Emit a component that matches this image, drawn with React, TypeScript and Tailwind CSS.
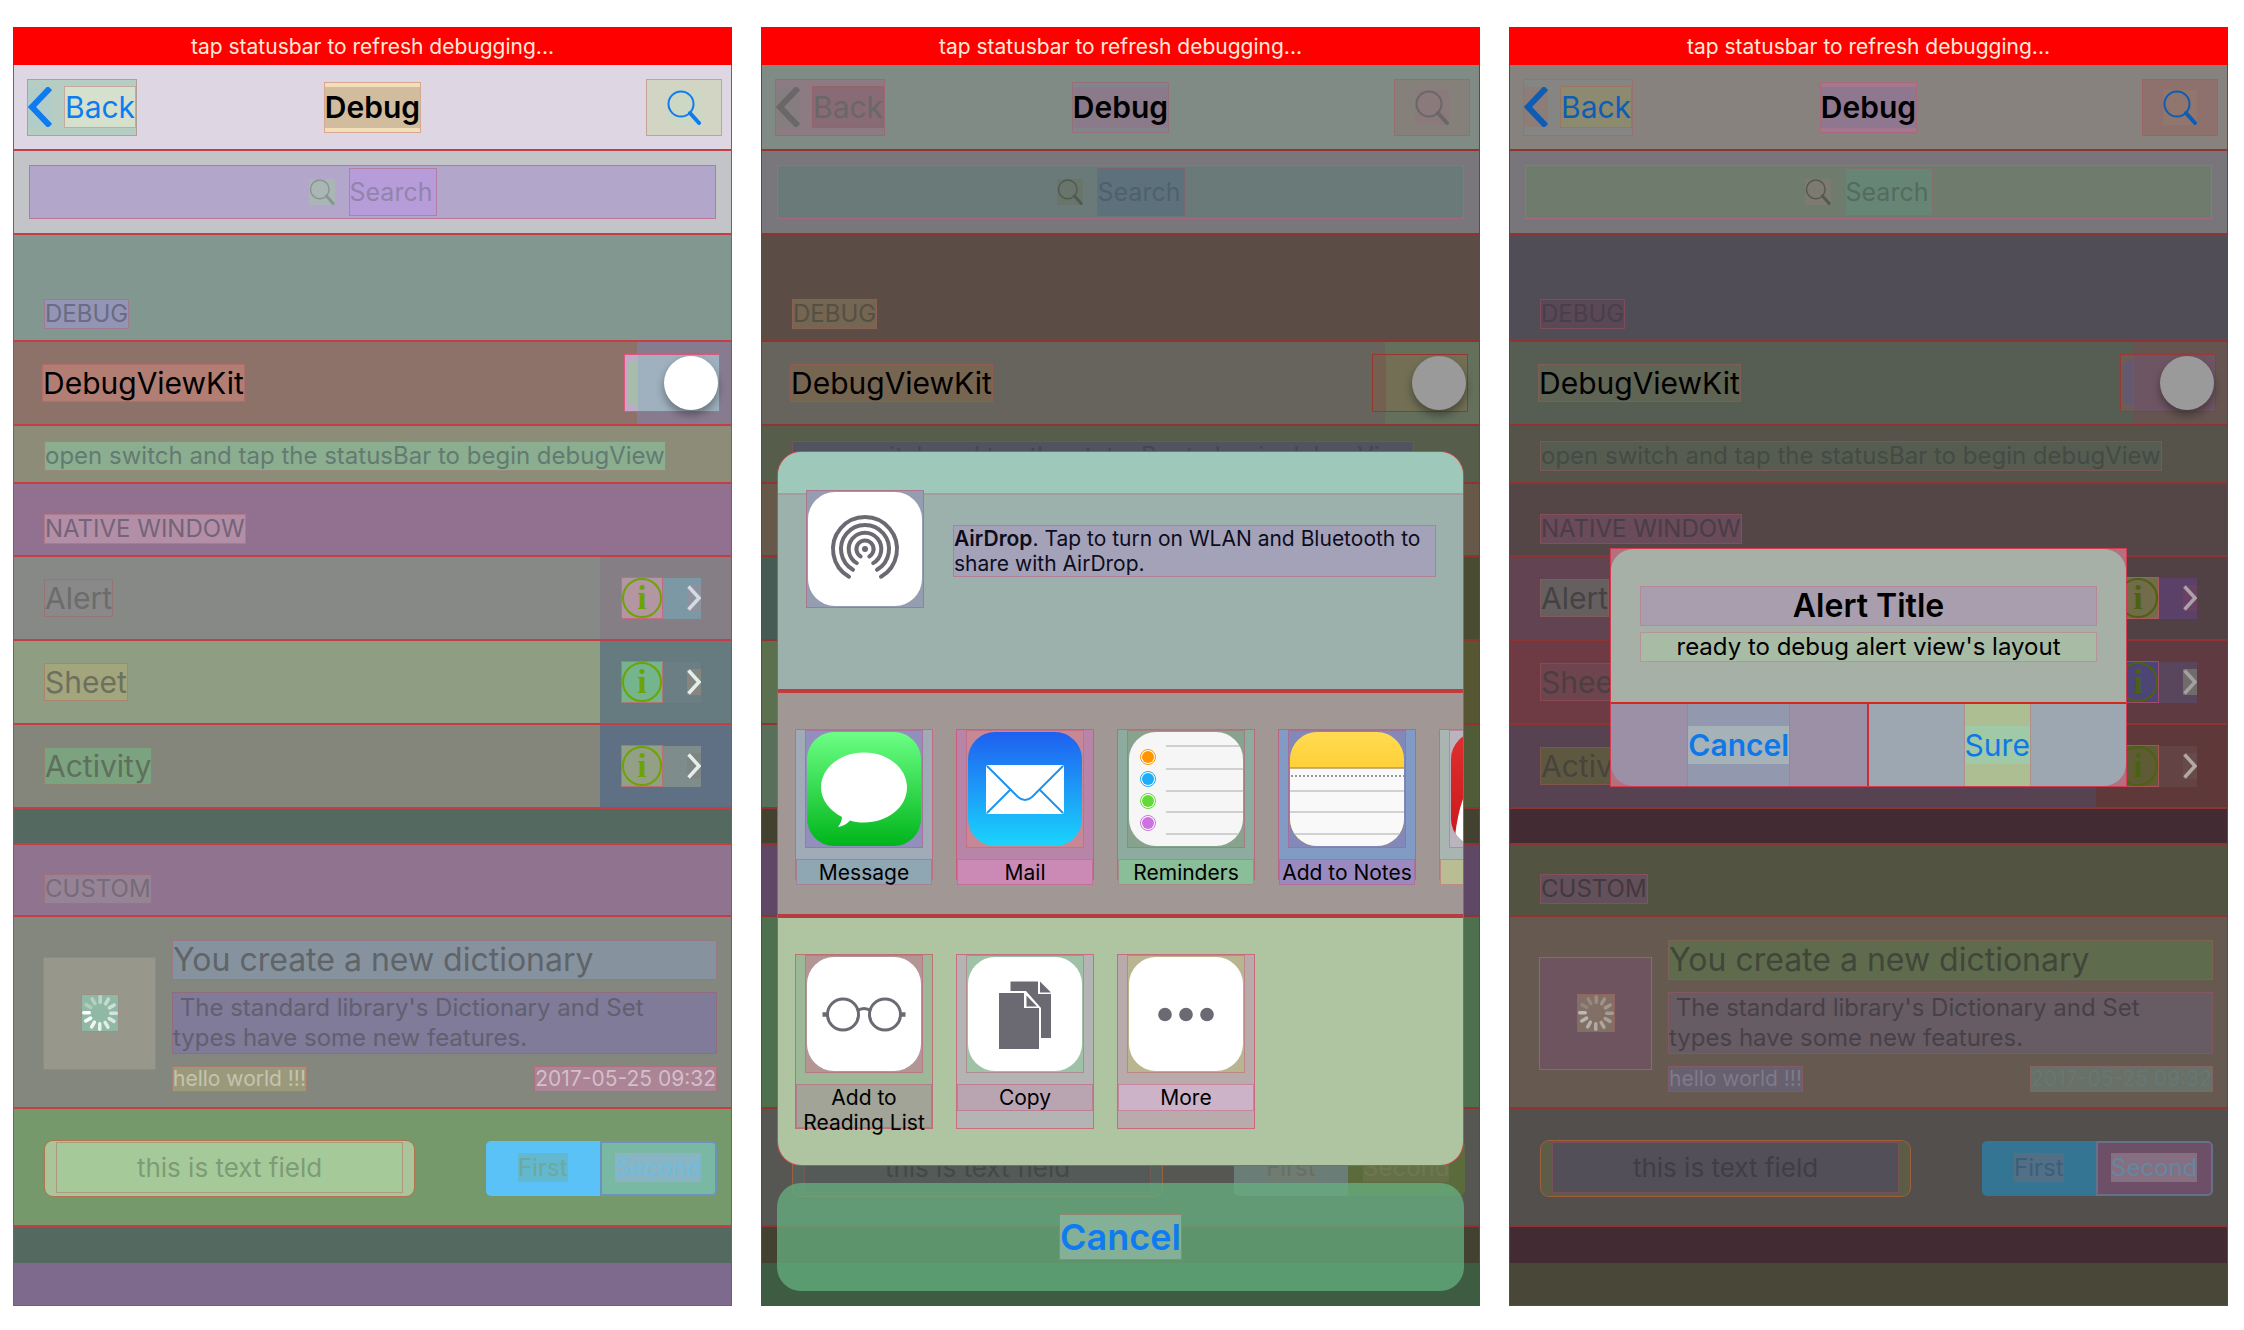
import React, { useId } from "react";
import type { ReactNode } from "react";

type RowTheme = { row: string; label: string; info: string; part: string; chevron: string };

type Theme = {
  line: string;
  nav: string;
  back: string;
  backArrow: string;
  backText: string;
  tint: string;
  titleOuter: string;
  titleInner: string;
  searchButton: string;
  searchButtonIcon: string;
  searchRow: string;
  searchBar: string;
  searchIcon: string;
  searchText: string;
  debugRow: string;
  debugLabel: string;
  kitRow: string;
  kitLabel: string;
  toggle: string;
  footRow: string;
  footLabel: string;
  nativeRow: string;
  nativeLabel: string;
  infoTint: string;
  rows: RowTheme[];
  gap: string;
  customRow: string;
  customLabel: string;
  card: string;
  image: string;
  spinner: string;
  title: string;
  body: string;
  hello: string;
  date: string;
  fieldRow: string;
  field: string;
  fieldInner: string;
  segFirst: string;
  segFirstText: string;
  segSecond: string;
  segSecondText: string;
  last: string;
};

const bright: Theme = {
  line: "border-[#c43e45]",
  nav: "bg-[#dfd6e3]",
  back: "bg-[#b5cdc3]",
  backArrow: "bg-[#b1cdc9]",
  backText: "bg-[#d5e1cc]",
  tint: "text-[#0f7bf0]",
  titleOuter: "bg-[#f2deb8]",
  titleInner: "bg-[#d1bc9e]",
  searchButton: "bg-[#d2d4c4]",
  searchButtonIcon: "bg-[#cdd8c4]",
  searchRow: "bg-[#c3c4c8]",
  searchBar: "bg-[#b2a7ca]",
  searchIcon: "bg-[#aab6b6] text-[#87958f]",
  searchText: "bg-[#b79cda] placeholder:text-[#9284ab]",
  debugRow: "bg-[#82978f]",
  debugLabel: "bg-[#9495b6] text-[#696c82]",
  kitRow: "bg-[#8c7269] bg-[linear-gradient(to_left,#877b90_94px,transparent_94px)]",
  kitLabel: "bg-[#b27e74]",
  toggle: "border-[#e0577c] bg-[linear-gradient(to_right,#c0a9c8_13px,#9fb0be_13px)] before:bg-white after:bg-[#a9bbab]",
  footRow: "bg-[#8c8c78]",
  footLabel: "bg-[#8bae91] text-[#647a70]",
  nativeRow: "bg-[#92708f]",
  nativeLabel: "bg-[#b38fa7] text-[#75637a]",
  infoTint: "text-[#6da305] border-[#6da305]",
  rows: [
    { row: "bg-[#868986] bg-[linear-gradient(to_left,#857e84_131px,transparent_131px)]", label: "bg-[#888988] text-[#6b6c6b]", info: "bg-[#b495a2]", part: "bg-[#7c98a4]", chevron: "bg-[#90919f] text-[#d3dbe4]" },
    { row: "bg-[#8f9e83] bg-[linear-gradient(to_left,#667b80_131px,transparent_131px)]", label: "bg-[#a3a57d] text-[#6d705e]", info: "bg-[#74b58e]", part: "bg-[#6a7e84]", chevron: "bg-[#868681] text-[#e3efec]" },
    { row: "bg-[#85867b] bg-[linear-gradient(to_left,#5f6f84_131px,transparent_131px)]", label: "bg-[#7ca37f] text-[#5f6f5e]", info: "bg-[#94a085]", part: "bg-[#7e8d8c]", chevron: "bg-[#7e8582] text-[#e3efec]" },
  ],
  gap: "bg-[#54695f]",
  customRow: "bg-[#90738e]",
  customLabel: "bg-[#978396] text-[#766b79]",
  card: "bg-[#84877e]",
  image: "bg-[#98978c]",
  spinner: "bg-[#90b9a5] text-white",
  title: "bg-[#87929f] text-[#5f6468]",
  body: "bg-[#7f7b98] text-[#615f70]",
  hello: "bg-[#9b997c] text-[#c4c4ad]",
  date: "bg-[#ab8495] text-[#d3bfca]",
  fieldRow: "bg-[#76996b]",
  field: "bg-[#aac59a]",
  fieldInner: "bg-[#a6c99a] placeholder:text-[#7c9c75]",
  segFirst: "bg-[#5ac2f7]",
  segFirstText: "bg-[#62b8ce] text-[#6baaa0]",
  segSecond: "bg-[#79b9a4] border-[#6b93bd]",
  segSecondText: "bg-[#88b4c3] text-[#6fbcdc]",
  last: "bg-[#7e6a8c]",
};

const sheetTheme: Theme = {
  line: "border-[#8e3431]",
  nav: "bg-[#818b86]",
  back: "bg-[#8c7b82]",
  backArrow: "bg-[#867d80]",
  backText: "bg-[#886b75]",
  tint: "text-[#696768]",
  titleOuter: "bg-[#83848c]",
  titleInner: "bg-[#8a7a8a]",
  searchButton: "bg-[#86807a]",
  searchButtonIcon: "bg-[#8b7a7b]",
  searchRow: "bg-[#79777b]",
  searchBar: "bg-[#697a78]",
  searchIcon: "bg-[#69746b] text-[#4e5a51]",
  searchText: "bg-[#5d717c] placeholder:text-[#4e616b]",
  debugRow: "bg-[#5b4c46]",
  debugLabel: "bg-[#756651] text-[#545045]",
  kitRow: "bg-[#66645c] bg-[linear-gradient(to_left,#646f5c_94px,transparent_94px)]",
  kitLabel: "bg-[#766551]",
  toggle: "border-[#99362f] bg-[linear-gradient(to_right,#746051_13px,#726f55_13px)] before:bg-[#9a9a9b] after:bg-[#746051]",
  footRow: "bg-[#565d4b]",
  footLabel: "bg-[#51535f] text-[#45474f]",
  nativeRow: "bg-[#67594a]",
  nativeLabel: "invisible",
  infoTint: "invisible",
  rows: [
    { row: "bg-[#475a53] bg-[linear-gradient(to_left,#4a4c31_131px,transparent_131px)]", label: "invisible", info: "invisible", part: "invisible", chevron: "invisible" },
    { row: "bg-[#5a704f] bg-[linear-gradient(to_left,#565632_131px,transparent_131px)]", label: "invisible", info: "invisible", part: "invisible", chevron: "invisible" },
    { row: "bg-[#586f5b] bg-[linear-gradient(to_left,#505c38_131px,transparent_131px)]", label: "invisible", info: "invisible", part: "invisible", chevron: "invisible" },
  ],
  gap: "bg-[#43412f]",
  customRow: "bg-[#5f4766]",
  customLabel: "invisible",
  card: "bg-[#4f704e]",
  image: "invisible",
  spinner: "invisible",
  title: "invisible",
  body: "invisible",
  hello: "invisible",
  date: "invisible",
  fieldRow: "bg-[#565753]",
  field: "bg-[#55605a]",
  fieldInner: "bg-[#535a57] placeholder:text-[#434946]",
  segFirst: "bg-[#6b7d77]",
  segFirstText: "bg-[#707c70] text-[#64706a]",
  segSecond: "bg-[#5b6b3c] border-[#5b6b3c]",
  segSecondText: "bg-[#667048] text-[#6e784f]",
  last: "bg-[#3e5c41]",
};

const alertTheme: Theme = {
  line: "border-[#8e3432]",
  nav: "bg-[#88827f]",
  back: "bg-[#858684]",
  backArrow: "bg-[#8c7d79]",
  backText: "bg-[#8c8b6f]",
  tint: "text-[#0f5cb5]",
  titleOuter: "bg-[#a1788f]",
  titleInner: "bg-[#8f7790]",
  searchButton: "bg-[#8e706d]",
  searchButtonIcon: "bg-[#90766c]",
  searchRow: "bg-[#79767b]",
  searchBar: "bg-[#6f7c6d]",
  searchIcon: "bg-[#7d7a72] text-[#56584f]",
  searchText: "bg-[#678575] placeholder:text-[#546b5f]",
  debugRow: "bg-[#504d56]",
  debugLabel: "bg-[#5a4857] text-[#483f4b]",
  kitRow: "bg-[#565d53] bg-[linear-gradient(to_left,#65544f_94px,transparent_94px)]",
  kitLabel: "bg-[#606454]",
  toggle: "border-[#963a38] bg-[linear-gradient(to_right,#6e5d55_13px,#6e5563_13px)] before:bg-[#9a9a9b] after:bg-[#635a72]",
  footRow: "bg-[#56544a]",
  footLabel: "bg-[#575c50] text-[#444b44]",
  nativeRow: "bg-[#544546]",
  nativeLabel: "bg-[#694b59] text-[#4a3d46]",
  infoTint: "text-[#4b6210] border-[#4b6210]",
  rows: [
    { row: "bg-[#614351] bg-[linear-gradient(to_left,#514145_131px,transparent_131px)]", label: "bg-[#655f60] text-[#464244]", info: "bg-[#736c4b]", part: "bg-[#5b4168]", chevron: "bg-[#6a4064] text-[#aba3a9]" },
    { row: "bg-[#6e3b45] bg-[linear-gradient(to_left,#5f3b41_131px,transparent_131px)]", label: "bg-[#6e444e] text-[#4b3f42]", info: "bg-[#4d4675]", part: "bg-[#59465c]", chevron: "bg-[#716b6c] text-[#a3a0a2]" },
    { row: "bg-[#574252] bg-[linear-gradient(to_left,#5f393a_131px,transparent_131px)]", label: "bg-[#5f5841] text-[#46453c]", info: "bg-[#5f5c35]", part: "bg-[#634343]", chevron: "bg-[#684b48] text-[#b0a9a8]" },
  ],
  gap: "bg-[#432b34]",
  customRow: "bg-[#525341]",
  customLabel: "bg-[#64505a] text-[#41393e]",
  card: "bg-[#655950]",
  image: "bg-[#6e545e]",
  spinner: "bg-[#826f66] text-[#bdb8b2]",
  title: "bg-[#5f6b4d] text-[#41463b]",
  body: "bg-[#675c63] text-[#474147]",
  hello: "bg-[#66606f] text-[#7f7b8c]",
  date: "bg-[#687068] text-[#657875]",
  fieldRow: "bg-[#524f4c]",
  field: "bg-[#5d5c47]",
  fieldInner: "bg-[#524f58] placeholder:text-[#3f3d45]",
  segFirst: "bg-[#347594]",
  segFirstText: "bg-[#526f86] text-[#3b5f7a]",
  segSecond: "bg-[#6e4f68] border-[#65708a]",
  segSecondText: "bg-[#866f80] text-[#6487a0]",
  last: "bg-[#484738]",
};

function Magnifier({ className }: { className: string }) {
  return (
    <svg viewBox="0 0 34 35" className={className} fill="none" stroke="currentColor" aria-hidden="true">
      <circle cx="14" cy="14" r="12.5" strokeWidth="2" />
      <path d="M23 23L32 33" strokeWidth="4" strokeLinecap="round" />
    </svg>
  );
}

function Spinner() {
  const petals = Array.from({ length: 12 }, (_, i) => i);
  return (
    <svg viewBox="-18 -18 36 36" className="size-full" aria-hidden="true">
      {petals.map((i) => (
        <rect key={i} x="-1.5" y="-18" width="3.5" height="9" rx="1.700" fill="currentColor" opacity={1 - ((i + 9) % 12) * 0.065} transform={`rotate(${-i * 30})`} />
      ))}
    </svg>
  );
}

const tag = "border border-[#b0555a]/40";

function SectionHeader({ row, label, line, height, children }: { row: string; label: string; line: string; height: string; children: ReactNode }) {
  return (
    <div className={`flex items-end border-b-2 pb-[11px] pl-[30px] ${height} ${row} ${line}`}>
      <h2 className={`text-[24px] leading-[28px] ${tag} ${label}`}>{children}</h2>
    </div>
  );
}

function Phone({ theme: t, children }: { theme: Theme; children?: ReactNode }) {
  const id = useId();
  return (
    <section className="relative overflow-hidden">
      <p className="h-[38px] bg-[#fe0000] text-center text-[21px] leading-[40px] text-[#ffe9d8]">tap statusbar to refresh debugging...</p>
      <div className={`border-x border-b ${t.line}`}>
        <header className={`grid h-[86px] grid-cols-[1fr_auto_1fr] items-center border-b-2 px-[9px] ${t.nav} ${t.line}`}>
          <button className={`ml-1 flex h-[57px] items-center gap-[12px] justify-self-start ${tag} ${t.back} ${t.tint}`}>
            <svg viewBox="0 0 24 40" className={`h-[40px] w-[24px] ${t.backArrow}`} fill="none" stroke="currentColor" strokeWidth="6" aria-hidden="true">
              <path d="M22 1L4 20L22 39" />
            </svg>
            <span className={`text-[30px] leading-[40px] ${tag} ${t.backText}`}>Back</span>
          </button>
          <div className={`py-[4px] ${tag} ${t.titleOuter}`}>
            <h1 className={`text-[30px] font-semibold leading-[41px] text-black ${t.titleInner}`}>Debug</h1>
          </div>
          <button aria-label="Search" className={`flex h-[57px] w-[76px] items-center justify-center justify-self-end ${tag} ${t.searchButton} ${t.tint}`}>
            <Magnifier className={`h-[35px] w-[34px] ${t.searchButtonIcon}`} />
          </button>
        </header>

        <div className={`h-[84px] border-b-2 px-[15px] py-[14px] ${t.searchRow} ${t.line}`}>
          <label className={`flex h-[54px] items-center justify-center gap-[14px] border border-[#c25f86]/70 ${t.searchBar}`}>
            <Magnifier className={`h-[26px] w-[26px] ${t.searchIcon}`} />
            <input type="text" placeholder="Search" aria-label="Search" className={`h-[48px] w-[88px] text-[25px] ${tag} ${t.searchText}`} />
          </label>
        </div>

        <SectionHeader row={t.debugRow} label={t.debugLabel} line={t.line} height="h-[107px]">DEBUG</SectionHeader>

        <div className={`flex h-[84px] items-center justify-between border-b-2 pl-[28px] pr-[11px] ${t.kitRow} ${t.line}`}>
          <label htmlFor={`${id}-kit`} className={`text-[30px] leading-[36px] text-black ${tag} ${t.kitLabel}`}>DebugViewKit</label>
          <input
            id={`${id}-kit`}
            type="checkbox"
            role="switch"
            defaultChecked
            className={`relative h-[58px] w-[96px] appearance-none border before:absolute before:right-[1px] before:top-[1px] before:z-10 before:size-[54px] before:rounded-full before:shadow-[0_5px_8px_rgba(0,0,0,0.35)] after:absolute after:left-[2px] after:top-[4px] after:h-[48px] after:w-[10px] after:rounded-l-full ${t.toggle}`}
          />
        </div>

        <div className={`h-[58px] border-b-2 pl-[30px] pt-[15px] ${t.footRow} ${t.line}`}>
          <p className={`w-fit whitespace-nowrap text-[24px] leading-[28px] ${tag} ${t.footLabel}`}>open switch and tap the statusBar to begin debugView</p>
        </div>

        <SectionHeader row={t.nativeRow} label={t.nativeLabel} line={t.line} height="h-[73px]">NATIVE WINDOW</SectionHeader>

        <ul>
          {["Alert", "Sheet", "Activity"].map((name, i) => {
            const r = t.rows[i];
            return (
              <li key={name} className={`flex h-[84px] items-center justify-between border-b-2 pl-[30px] pr-[30px] ${r.row} ${t.line}`}>
                <span className={`text-[30px] leading-[36px] ${tag} ${r.label}`}>{name}</span>
                <span className="flex items-center">
                  <button aria-label={`About ${name}`} className={`border border-[#d0506a]/60 ${r.info}`}>
                    <span className={`flex size-[40px] items-center justify-center rounded-full border-2 font-['Liberation_Serif'] text-[34px] font-bold leading-none ${t.infoTint}`}>i</span>
                  </button>
                  <span className={`flex h-[41px] w-[38px] items-center justify-end ${r.part}`}>
                    <svg viewBox="0 0 14 26" className={`h-[26px] w-[14px] ${r.chevron}`} fill="none" stroke="currentColor" strokeWidth="3.5" aria-hidden="true">
                      <path d="M1.500 1.500L12 13L1.500 24.500" />
                    </svg>
                  </span>
                </span>
              </li>
            );
          })}
        </ul>

        <div className={`h-[36px] border-b-2 ${t.gap} ${t.line}`} />

        <SectionHeader row={t.customRow} label={t.customLabel} line={t.line} height="h-[72px]">CUSTOM</SectionHeader>

        <article className={`flex h-[192px] items-center gap-[16px] border-b-2 pl-[29px] pr-[14px] pt-[2px] ${t.card} ${t.line}`}>
          <div className={`flex size-[113px] shrink-0 items-center justify-center border border-[#c06a6c]/60 ${t.image}`}>
            <div className={`size-[38px] ${tag} ${t.spinner}`}>
              <Spinner />
            </div>
          </div>
          <div className="flex min-w-0 flex-1 flex-col gap-[12px] pt-[5px]">
            <h3 className={`text-[32px] leading-[38px] ${tag} ${t.title}`}>You create a new dictionary</h3>
            <p className={`whitespace-pre-wrap text-[24px] leading-[30px] ${tag} ${t.body}`}>{" The standard library's Dictionary and Set\ntypes have some new features."}</p>
            <div className="flex justify-between text-[21px] leading-[24px]">
              <span className={`${tag} ${t.hello}`}>hello world !!!</span>
              <time className={`${tag} ${t.date}`}>2017-05-25 09:32</time>
            </div>
          </div>
        </article>

        <div className={`flex h-[118px] items-center justify-between border-b-2 pl-[30px] pr-[14px] pt-[2px] ${t.fieldRow} ${t.line}`}>
          <div className={`h-[57px] w-[371px] rounded-[9px] border border-[#b0603a]/80 px-[11px] pb-[3px] pt-[1px] ${t.field}`}>
            <input type="text" aria-label="Text field" placeholder="this is text field" className={`h-full w-full text-center text-[26px] ${tag} ${t.fieldInner}`} />
          </div>
          <div role="group" aria-label="Segments" className="flex h-[55px] w-[231px] overflow-hidden rounded-[5px] text-[24px] leading-[30px]">
            <button aria-pressed="true" className={`flex-1 ${t.segFirst}`}>
              <span className={t.segFirstText}>First</span>
            </button>
            <button aria-pressed="false" className={`flex-1 rounded-r-[5px] border-2 ${t.segSecond}`}>
              <span className={t.segSecondText}>Second</span>
            </button>
          </div>
        </div>

        <div className={`h-[36px] ${t.gap}`} />
        <div className={`h-[42px] ${t.last}`} />
      </div>
      {children}
    </section>
  );
}

function AppIcon({ from, to, id, children }: { from: string; to: string; id: string; children?: ReactNode }) {
  return (
    <svg viewBox="0 0 114 114" className="size-[114px] rounded-[27px]" aria-hidden="true">
      <defs>
        <linearGradient id={id} x1="0" y1="0" x2="0" y2="1">
          <stop offset="0" stopColor={from} />
          <stop offset="1" stopColor={to} />
        </linearGradient>
      </defs>
      <rect width="114" height="114" fill={`url(#${id})`} />
      {children}
    </svg>
  );
}

const MessageIcon = () => (
  <AppIcon id="message" from="#6cff85" to="#00b51b">
    <path d="M57 20.500C81 20.500 100 36 100 55.500S81 90.500 57 90.500C52 90.500 47 90 43 88.500C40 92 35 94.500 31 95C33.500 92 35 88 35 85C23 79 14 68 14 55.500C14 36 33 20.500 57 20.500Z" fill="#fff" />
  </AppIcon>
);

const MailIcon = () => (
  <AppIcon id="mail" from="#1f5ff0" to="#1ad5fd">
    <rect x="18" y="33" width="78" height="49" rx="2" fill="#fff" />
    <path d="M19 34L50 65Q57 71 64 65L95 34M19 81L42.500 57.500M95 81L71.500 57.500" fill="none" stroke="#1f93f2" strokeWidth="2" />
  </AppIcon>
);

const RemindersIcon = () => (
  <AppIcon id="reminders" from="#f6f6f6" to="#f6f6f6">
    {[14, 37, 59, 80, 102].map((y) => (
      <path key={y} d={`M37 ${y}H114`} stroke="#a9a9a9" strokeWidth="1.200" />
    ))}
    {([[25, "#ff9500"], [47, "#1badf8"], [69, "#63da38"], [91, "#cc73e1"]] as [number, string][]).map(([y, c]) => (
      <g key={y}>
        <circle cx="19" cy={y} r="7.500" fill="#fff" stroke={c} strokeWidth="1" />
        <circle cx="19" cy={y} r="6" fill={c} />
      </g>
    ))}
  </AppIcon>
);

const NotesIcon = () => (
  <AppIcon id="notes" from="#ffdb52" to="#ffb800">
    <rect y="36" width="114" height="78" fill="#f9f9f9" />
    <path d="M0 36H114" stroke="#b89a50" strokeWidth="1.500" />
    <path d="M1 44H114" stroke="#999" strokeWidth="2" strokeDasharray="2 2" />
    <path d="M0 59H114M0 80H114M0 102H114" stroke="#a9a9a9" strokeWidth="1.200" />
  </AppIcon>
);

const RedIcon = () => (
  <AppIcon id="red" from="#e02f30" to="#c9171b">
    <path d="M4 104C6 88 9 72 15 60C26 48 40 40 60 40H114V114H4Z" fill="#fff" />
  </AppIcon>
);

const GlassesIcon = () => (
  <AppIcon id="glasses" from="#fff" to="#fff">
    <g fill="none" stroke="#6b6a73" strokeWidth="3">
      <circle cx="36" cy="57.500" r="15.500" />
      <circle cx="78" cy="57.500" r="15.500" />
      <path d="M50 54Q57 49 64 54" />
      <path d="M15.500 57.500H20.500M93.500 57.500H98.500" strokeWidth="4.500" />
    </g>
  </AppIcon>
);

const CopyIcon = () => (
  <AppIcon id="copy" from="#fff" to="#fff">
    <path d="M42.500 24.500H70V37H83V81H42.500Z" fill="#6b6a73" />
    <path d="M72 24.500L83 35.500H72Z" fill="#6b6a73" />
    <path d="M29 34H58L73 51V94H29Z" fill="#fff" />
    <path d="M31 36H56V51H71V92H31Z" fill="#6b6a73" />
    <path d="M58.500 38.500L69 49.500H58.500Z" fill="#6b6a73" />
  </AppIcon>
);

const MoreIcon = () => (
  <AppIcon id="more" from="#fff" to="#fff">
    {[36, 57, 78].map((x) => (
      <circle key={x} cx={x} cy="57.500" r="6.800" fill="#6b6a73" />
    ))}
  </AppIcon>
);

const AirDropIcon = () => (
  <AppIcon id="airdrop" from="#fff" to="#fff">
    <g fill="none" stroke="#6b6a73" strokeWidth="4" strokeLinecap="round">
      {[32, 24, 16.3, 8.6].map((r) => (
        <path key={r} d={`M${57 - r * 0.5} ${57 + r * 0.866}A${r} ${r} 0 1 1 ${57 + r * 0.5} ${57 + r * 0.866}`} />
      ))}
    </g>
    <circle cx="57" cy="57" r="3" fill="#6b6a73" />
  </AppIcon>
);

type Item = { name: string; icon: ReactNode; cell: string; frame: string; label: string };

const apps: Item[] = [
  { name: "Message", icon: <MessageIcon />, cell: "bg-[#a1aab7]", frame: "bg-[#918fbb]", label: "bg-[#8ea7b3]" },
  { name: "Mail", icon: <MailIcon />, cell: "bg-[#b884a8]", frame: "bg-[#c58894]", label: "bg-[#cb89b5]" },
  { name: "Reminders", icon: <RemindersIcon />, cell: "bg-[#8eaba0]", frame: "bg-[#88a38d]", label: "bg-[#89be98]" },
  { name: "Add to Notes", icon: <NotesIcon />, cell: "bg-[#819bc4]", frame: "bg-[#8289b9]", label: "bg-[#9b8ac0]" },
  { name: "", icon: <RedIcon />, cell: "bg-[#a9b5b0]", frame: "bg-[#bab4bf]", label: "bg-[#b8bd94]" },
];

const actions: Item[] = [
  { name: "Add to Reading List", icon: <GlassesIcon />, cell: "bg-[#9cb896]", frame: "bg-[#b29694]", label: "bg-[#a1a497]" },
  { name: "Copy", icon: <CopyIcon />, cell: "bg-[#b4b4b5]", frame: "bg-[#9fc1a6]", label: "bg-[#b9a5b1]" },
  { name: "More", icon: <MoreIcon />, cell: "bg-[#b9abac]", frame: "bg-[#b9b590]", label: "bg-[#ccb3c8]" },
];

function ItemCell({ item, height }: { item: Item; height: string }) {
  return (
    <button aria-label={item.name || "More apps"} className={`flex w-[138px] shrink-0 flex-col items-center justify-start border border-[#d0506a]/70 ${height} ${item.cell}`}>
      <span className={`flex size-[118px] shrink-0 items-center justify-center border border-[#c05a78]/50 ${item.frame}`}>{item.icon}</span>
      <span className={`mt-[11px] min-h-[26px] w-full border border-[#c05a78]/50 text-[21px] leading-[25px] text-black ${item.label}`}>{item.name}</span>
    </button>
  );
}

function ShareSheet() {
  return (
    <div role="dialog" aria-label="Share" className="absolute inset-x-[16px] bottom-[15px] flex flex-col gap-[17px]">
      <div className="overflow-hidden rounded-[24px] border border-[#cf4a4c]">
        <div className="flex h-[241px] items-start gap-[29px] border-b-4 border-[#c23c3e] bg-[#9cb0ac] bg-[linear-gradient(to_bottom,#9ec9ba_41px,#a09f9e_41px,#a09f9e_43px,transparent_43px)] pl-[28px] pr-[27px] pt-[38px]">
          <span className="flex size-[118px] shrink-0 items-center justify-center border border-[#c05a78]/60 bg-[#959db0]">
            <AirDropIcon />
          </span>
          <p className="mt-[35px] flex-1 border border-[#c05a78]/50 bg-[#a4a2b9] text-[21px] leading-[25px] text-[#0d0d1c]">
            <strong className="font-semibold">AirDrop</strong>. Tap to turn on WLAN and Bluetooth to share with AirDrop.
          </p>
        </div>
        <div className="flex h-[225px] gap-[23px] overflow-hidden border-b-4 border-[#b23e42] bg-[#a19896] pl-[17px] pt-[36px]">
          {apps.map((item) => (
            <ItemCell key={item.name} item={item} height="h-[151px]" />
          ))}
        </div>
        <div className="flex h-[247px] gap-[23px] bg-[#afc4a1] pl-[17px] pt-[36px]">
          {actions.map((item) => (
            <ItemCell key={item.name} item={item} height="h-[175px]" />
          ))}
        </div>
      </div>
      <button className="flex h-[108px] items-center justify-center rounded-[24px] bg-[#66b080]/75">
        <span className="border border-[#a06a5a]/60 bg-[#85b098] text-[36px] font-semibold leading-[44px] text-[#0f7bf0]">Cancel</span>
      </button>
    </div>
  );
}

function AlertDialog() {
  return (
    <div role="alertdialog" aria-labelledby="alert-title" aria-describedby="alert-text" className="absolute inset-x-[101px] top-[521px] border border-[#d23c50] bg-[#b3707f]">
      <div className="overflow-hidden rounded-[22px]">
        <div className="flex h-[153px] flex-col gap-[6px] bg-[#a6b0a7] px-[29px] pt-[37px] text-center text-black">
          <h2 id="alert-title" className="border border-[#c07a90]/60 bg-[#a99eae] text-[32px] font-semibold leading-[38px]">Alert Title</h2>
          <p id="alert-text" className="border border-[#c07a90]/60 bg-[#a7bba5] text-[24px] leading-[28px]">ready to debug alert view's layout</p>
        </div>
        <div className="grid h-[84px] grid-cols-2 border-t-2 border-[#d2281e] text-[30px] leading-[38px] text-[#0f78e8]">
          <button className="flex justify-center border-r-2 border-[#c62f35] bg-[#9b90a5]">
            <span className="flex h-full items-center border-x border-[#b0708a]/60 bg-[#9298ae]">
              <span className="bg-[#a5b3b8] font-semibold">Cancel</span>
            </span>
          </button>
          <button className="flex justify-center bg-[#9ca7b2]">
            <span className="flex h-full items-center border-x border-[#b0708a]/60 bg-[#acbe92]">
              <span className="bg-[#a0c9a7]">Sure</span>
            </span>
          </button>
        </div>
      </div>
    </div>
  );
}

export default function App() {
  return (
    <main className="grid min-h-screen grid-cols-3 items-start gap-[29px] bg-white pb-6 pl-[13px] pr-4 pt-[27px] font-['Inter',sans-serif]">
      <Phone theme={bright} />
      <Phone theme={sheetTheme}>
        <ShareSheet />
      </Phone>
      <Phone theme={alertTheme}>
        <AlertDialog />
      </Phone>
    </main>
  );
}
